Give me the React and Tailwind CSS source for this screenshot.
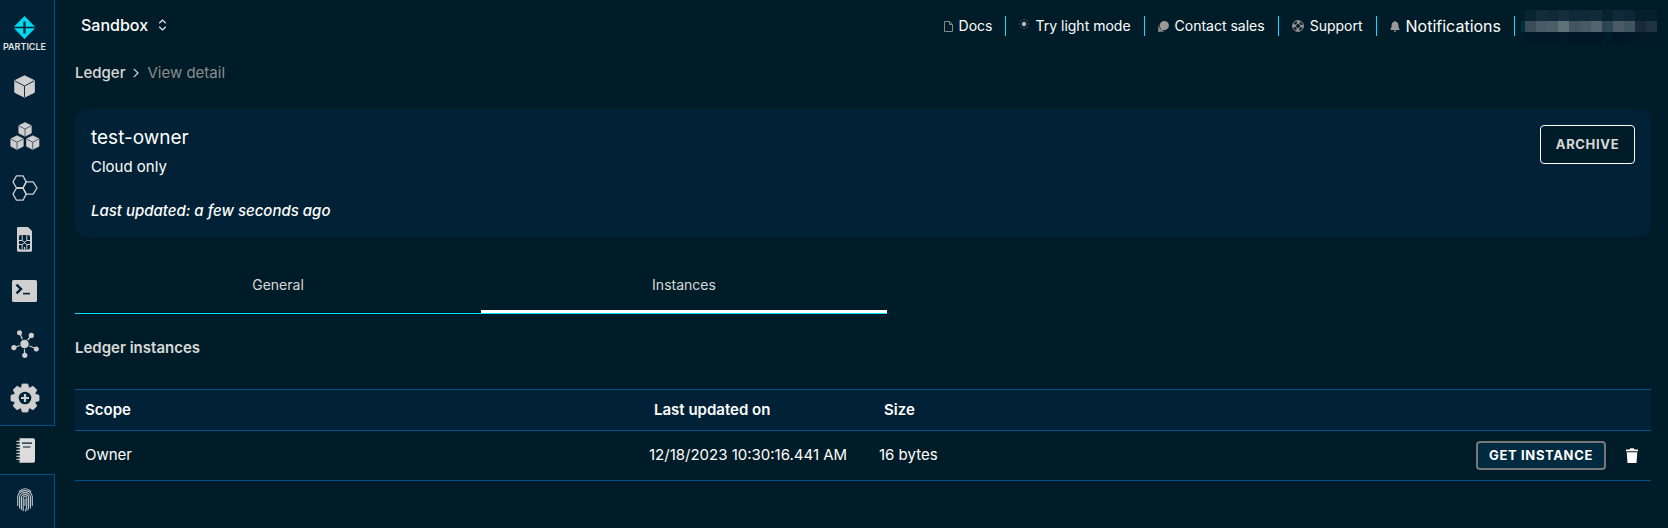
import React from "react";

const svgBase = "block shrink-0";

function Logo() {
  return (
    <svg className={svgBase} width="21" height="23" viewBox="0 0 21 23">
      <path fill="#00d9f0" d="M10.500 0 21 10.700H11.600V5.500H9.400v5.200H0zM0 12.300h9.400v5.200h2.200v-5.200H21L10.500 23z" />
    </svg>
  );
}

const Cube = ({ x = 0, y = 0, s = 1 }) => (
  <g transform={`translate(${x} ${y}) scale(${s})`}>
    <path fill="#cfcfcf" stroke="#cfcfcf" strokeLinejoin="round" d="M10.500 .8 20.300 5.600v11.800L10.500 22.200.8 17.400V5.600z" />
    <path fill="none" stroke="#002136" strokeWidth={s < 1 ? 1 : 0.9} d="M1 6l9.500 5L20 6M10.500 11v11" />
  </g>
);

function DeviceIcon() {
  return (
    <svg className={svgBase} width="21" height="23" viewBox="0 0 21 23"><Cube /></svg>
  );
}

function ProductsIcon() {
  return (
    <svg className={svgBase} width="30" height="29" viewBox="0 0 30 29">
      <Cube x={8.3} y={0} s={0.64} />
      <Cube x={0.3} y={13.2} s={0.64} />
      <Cube x={16} y={13.2} s={0.64} />
    </svg>
  );
}

function HexIcon() {
  return (
    <svg className={svgBase} width="26" height="26" viewBox="0 0 26 26" fill="none" stroke="#cfcfcf" strokeWidth="1.300" strokeLinejoin="round">
      <path d="M4.500.8h6.500L14.200 6.900 11 13H4.500L1 6.900z" />
      <path d="M4.500 13H11l3.200 6.100L11 25.200H4.500L1 19.100z" />
      <path d="M14.200 6.900h7L25 13l-3.800 6.100h-7L11 13z" />
    </svg>
  );
}

function SimIcon() {
  return (
    <svg className={svgBase} width="15" height="25" viewBox="0 0 15 25">
      <path fill="#cfcfcf" d="M1.200 0H11l4 4v19.500a1.200 1.200 0 0 1-1.200 1.200H1.200A1.200 1.200 0 0 1 0 23.500V1.200A1.200 1.200 0 0 1 1.200 0z" />
      <rect x="2" y="8" width="11" height="14.500" rx="1.800" fill="#002136" />
      <path fill="none" stroke="#cfcfcf" strokeWidth="1" d="M2 13.500h3L7.500 15l2.500-1.500h3M2 17.500h3L7.500 16l2.500 1.500h3M5.200 8v5.300M9.800 8v5.300M5.200 17.700v4.800M9.800 17.700v4.800M7.500 15v1M7.500 20v2.500" />
    </svg>
  );
}

function ConsoleIcon() {
  return (
    <svg className={svgBase} width="25" height="22" viewBox="0 0 25 22">
      <rect width="25" height="22" rx="1.500" fill="#cfcfcf" />
      <path fill="none" stroke="#002136" strokeWidth="2.400" d="M4.500 4.600 9 9l-4.500 4.400" />
      <path stroke="#002136" strokeWidth="1.600" d="M11 13.600h7" />
    </svg>
  );
}

function HubIcon() {
  return (
    <svg className={svgBase} width="28" height="28" viewBox="0 0 28 28" fill="#cfcfcf" stroke="#cfcfcf" strokeWidth="1.200">
      <path fill="none" d="M13.500 14 8.500 2.500M13.500 14l7-8.500M13.500 14 3 17.500M13.500 14 26 19M13.500 14v11.500" />
      <g stroke="none">
        <circle cx="13.500" cy="14" r="4.700" stroke="#002136" strokeWidth="1" />
        <circle cx="8.500" cy="2.700" r="2.500" />
        <circle cx="20.300" cy="5.400" r="2.600" />
        <circle cx="2.900" cy="17.600" r="2.600" />
        <circle cx="25.300" cy="19" r="2.500" />
        <circle cx="13.800" cy="25.300" r="2.600" />
      </g>
    </svg>
  );
}

function GearIcon() {
  return (
    <svg className={svgBase} width="30" height="30" viewBox="-15 -15 30 30">
      <g fill="#cfcfcf">
        {[0, 45, 90, 135, 180, 225, 270, 315].map((a) => (
          <path key={a} transform={`rotate(${a})`} d="M-4-9.500-2.700-14h5.400L4-9.500z" stroke="#cfcfcf" strokeWidth=".8" strokeLinejoin="round" />
        ))}
        <circle r="11" />
      </g>
      <circle r="6.300" fill="#002136" />
      <path stroke="#cfcfcf" strokeWidth="2.200" d="M-4 0h8M0-4v8" />
    </svg>
  );
}

function LedgerIcon() {
  return (
    <svg className={svgBase} width="19" height="25" viewBox="0 0 19 25">
      <rect x="2.500" y=".3" width="16.500" height="24.400" rx="1.800" fill="#dcdcdc" />
      <path stroke="#001c28" strokeWidth="1.200" d="M6 5.200h10M7 9h7.500" />
      <path stroke="#001c28" strokeWidth="1.200" d="M2 1.800h2M2 4.800h2M2 7.800h2M2 10.800h2M2 13.800h2M2 16.800h2M2 19.800h2M2 22.800h2" />
      <path stroke="#dcdcdc" strokeWidth="1" d="M.3 3.300h2.500M.3 6.300h2.500M.3 9.300h2.500M.3 12.300h2.500M.3 15.300h2.500M.3 18.300h2.500M.3 21.300h2.500" />
    </svg>
  );
}

function FingerprintIcon() {
  return (
    <svg className={svgBase} width="16" height="24" viewBox="0 0 16 24" fill="none" stroke="#c3c8ca" strokeWidth="1.100" strokeLinecap="round">
      <path d="M2.200 3.400Q8-1.800 13.800 3.400" />
      <path d="M.7 17.500V9C.7 5 4 2.600 8 2.600S15.300 5 15.300 9v8.500" />
      <path d="M2.600 20V9.300C2.600 6.400 5 4.600 8 4.600s5.400 1.800 5.400 4.700V20" />
      <path d="M4.400 21.500V9.800C4.400 7.800 5.900 6.600 8 6.600s3.600 1.200 3.600 3.200v7.700q0 2-.8 4.500" />
      <path d="M6.200 22.800V10.400c0-1.200.8-1.900 1.800-1.900s1.800.7 1.800 1.900V17q0 2.500-1.300 6" />
      <path d="M8 11v6.500" />
    </svg>
  );
}

const navIcons = {
  docs: (
    <svg className={svgBase} width="9" height="11" viewBox="0 0 9 11" fill="none" stroke="#85898b">
      <path d="M.5.500H5.500L8.500 3.500v7H.5zM5.500.500v3h3" />
    </svg>
  ),
  sun: (
    <svg className={`${svgBase} mb-1`} width="10" height="10" viewBox="0 0 10 10">
      <circle cx="5" cy="5" r="2.200" fill="#b8b8b5" />
      <path stroke="#69757b" d="M5 0v1.400M5 8.600V10M0 5h1.400M8.600 5H10M1.500 1.500l1 1M7.500 7.500l1 1M8.500 1.500l-1 1M2.500 7.500l-1 1" />
    </svg>
  ),
  chat: (
    <svg className={svgBase} width="11" height="11" viewBox="0 0 11 11" fill="#9a9895">
      <path d="M6.300 0A4.500 4.500 0 1 1 6.300 9.200H2.200l.9-1.400A4.500 4.500 0 0 1 6.300 0z" />
      <path d="M1 4.500C1 8 3 10 6.500 10.400 5.500 11 3.600 11 2.500 10.500L0 11l.6-2.200C-.1 7.500 0 5.700 1 4.500z" />
    </svg>
  ),
  support: (
    <svg className={svgBase} width="12" height="12" viewBox="0 0 12 12" fill="none" stroke="#9a9895">
      <circle cx="6" cy="6" r="5.400" />
      <circle cx="6" cy="6" r="4" strokeWidth="2.200" strokeDasharray="3.140 3.140" strokeDashoffset="1.570" />
      <circle cx="6" cy="6" r="2.500" />
    </svg>
  ),
  bell: (
    <svg className={svgBase} width="10" height="11" viewBox="0 0 10 11" fill="#9a9895">
      <path d="M5 0c.6 0 .9.300.9.800C7.600 1.200 8.400 2.600 8.400 4.300c0 2.500.6 3.500 1.600 4.700H0c1-1.200 1.600-2.200 1.600-4.700C1.600 2.600 2.400 1.200 4.100.8 4.100.300 4.400 0 5 0zM3.700 9.500h2.600Q6 11 5 11T3.700 9.500z" />
    </svg>
  ),
};

const sideItems = [
  ["Devices", DeviceIcon, "h-[50px]"],
  ["Products", ProductsIcon, "h-[51px]"],
  ["Integrations", HexIcon, "h-[52px]"],
  ["SIM cards", SimIcon, "h-[51px]"],
  ["Console", ConsoleIcon, "h-[52px]"],
  ["Network", HubIcon, "h-[53px]"],
  ["Settings", GearIcon, "h-[55px]"],
];

function Sidebar() {
  return (
    <nav className="flex w-[55px] shrink-0 flex-col">
      <div className="border-r border-[#00508c] bg-[#002136] pr-[5px]">
        <a href="#home" className="flex flex-col items-center pt-4">
          <Logo />
          <span className="mt-[3px] py-px text-[9px] leading-2 font-semibold text-[#e4e4e4]">PARTICLE</span>
        </a>
        <div className="pt-[9px]">
          {sideItems.map(([label, Icon, h]) => (
            <a key={label} href="#" aria-label={label} className={`flex items-center justify-center ${h}`}>
              <Icon />
            </a>
          ))}
        </div>
      </div>
      <a href="#ledger" aria-label="Ledger" className="flex h-[50px] items-center justify-center border-y border-[#00508c] pr-[5px]">
        <LedgerIcon />
      </a>
      <div className="grow border-r border-[#00508c] bg-[#002136] pr-[5px]">
        <a href="#security" aria-label="Security" className="flex h-[50px] items-center justify-center">
          <FingerprintIcon />
        </a>
      </div>
    </nav>
  );
}

const mosaic = [
  ["#001f2d", "#0a2431", "#152d39", "#10293a", "#152e3a", "#10293a", "#112a3a", "#122b39", "#09222f", "#10293a", "#0d2735", "#061f2c", "#061f2c"],
  ["#00303d", "#3b4b58", "#485b66", "#4a5e68", "#5c7178", "#41545f", "#485a65", "#53646d", "#2d4653", "#4a5a67", "#3f5660", "#182b38", "#20333f"],
  ["#001b29", "#001828", "#001828", "#001828", "#03192b", "#001626", "#001626", "#001626", "#001a2a", "#001626", "#001828", "#001a28", "#001a28"],
];

function Account() {
  return (
    <button type="button" aria-label="Account" className="ml-1.5 block">
      {mosaic.map((row, r) => (
        <span key={r} className="flex h-[11px]">
          {row.map((c, i) => (
            <span key={i} className={i ? "w-[11px]" : "w-1"} style={{ backgroundColor: c }} />
          ))}
        </span>
      ))}
    </button>
  );
}

function NavItem({ icon, children, large }) {
  return (
    <a href="#" className="flex h-5 items-center gap-1.5 border-r border-[#00e1ff] px-[13px]">
      {navIcons[icon]}
      <span className={large ? "text-base leading-5" : "text-sm"}>{children}</span>
    </a>
  );
}

function Header() {
  return (
    <header className="flex h-[50px] items-center justify-between pr-[11px] pl-[26px]">
      <button type="button" className="flex items-center gap-2.5 text-base font-medium">
        Sandbox
        <svg className="block" width="9" height="12" viewBox="0 0 9 12" fill="none" stroke="#e8e8e8" strokeWidth="1.200">
          <path d="M1.200 4.200 4.500 1l3.300 3.200M1.200 7.800 4.500 11l3.300-3.200" />
        </svg>
      </button>
      <div className="flex items-center pt-0.5">
        <NavItem icon="docs">Docs</NavItem>
        <NavItem icon="sun">Try light mode</NavItem>
        <NavItem icon="chat">Contact sales</NavItem>
        <NavItem icon="support">Support</NavItem>
        <NavItem icon="bell" large>Notifications</NavItem>
        <Account />
      </div>
    </header>
  );
}

function Instances() {
  return (
    <table className="mt-[31px] w-full table-fixed border-collapse text-left text-[15px]">
      <colgroup>
        <col className="w-[564px]" />
        <col className="w-[230px]" />
        <col />
        <col className="w-[220px]" />
      </colgroup>
      <thead>
        <tr className="h-[41px] border-y border-[#00508c] bg-[#002136]">
          <th className="px-2.5 font-semibold">Scope</th>
          <th className="px-[15px] font-semibold">Last updated on</th>
          <th className="px-[15px] font-semibold">Size</th>
          <th aria-label="Actions" />
        </tr>
      </thead>
      <tbody>
        <tr className="h-[50px] border-b border-[#00508c]">
          <td className="px-2.5">Owner</td>
          <td className="px-2.5 whitespace-nowrap">12/18/2023 10:30:16.441 AM</td>
          <td className="px-2.5">16 bytes</td>
          <td>
            <div className="flex items-center justify-end gap-5 pr-[13px]">
              <button type="button" className="h-[29px] w-[130px] rounded border-2 border-[#777] bg-[#002a40] text-[13px] font-bold tracking-wider">
                GET INSTANCE
              </button>
              <button type="button" aria-label="Delete">
                <svg className="block" width="12" height="15" viewBox="0 0 12 15" fill="#fff">
                  <path d="M0 1.500h3.500L4.300.300h3.400l.8 1.200H12v1.700H0zM.7 4.200h10.600L10.500 15h-9z" />
                </svg>
              </button>
            </div>
          </td>
        </tr>
      </tbody>
    </table>
  );
}

export default function App() {
  return (
    <div className="flex min-h-screen bg-[#001c28] font-['Inter',sans-serif] text-white">
      <Sidebar />
      <div className="min-w-0 grow">
        <Header />
        <main className="pr-[17px] pl-5">
          <nav aria-label="Breadcrumb" className="flex h-[46px] items-center gap-2 text-[15px]">
            <a href="#ledger" className="font-medium text-[#d9d9d9]">Ledger</a>
            <svg className="block" width="6" height="10" viewBox="0 0 6 10" fill="none" stroke="#d9d9d9" strokeWidth="1.200">
              <path d="M.8.800 5 5 .8 9.200" />
            </svg>
            <span className="text-[#8a8d8f]">View detail</span>
          </nav>
          <section className="mt-[13px] flex h-32 items-start justify-between rounded-xl bg-[#002136] p-4">
            <div>
              <h1 className="text-[19px] leading-[26px]">test-owner</h1>
              <p className="mt-1.5 text-[15px] leading-5">Cloud only</p>
              <p className="mt-6 text-[15px] leading-5 font-medium italic">Last updated: a few seconds ago</p>
            </div>
            <button type="button" className="h-[39px] w-[95px] rounded border border-white bg-[#001c28] text-[13px] font-bold tracking-wider text-[#d9d9d9]">
              ARCHIVE
            </button>
          </section>
          <div role="tablist" className="mt-[22px] flex h-[55px] max-w-[812px] border-b border-[#00e1ff] text-sm text-[#d9d9d9]">
            <button type="button" role="tab" aria-selected="false" className="flex-1 border-b-[3px] border-transparent">General</button>
            <button type="button" role="tab" aria-selected="true" className="flex-1 border-b-[3px] border-white">Instances</button>
          </div>
          <h2 className="mt-6 text-[15px] leading-5 font-semibold text-[#d9d9d9]">Ledger instances</h2>
          <Instances />
        </main>
      </div>
    </div>
  );
}
